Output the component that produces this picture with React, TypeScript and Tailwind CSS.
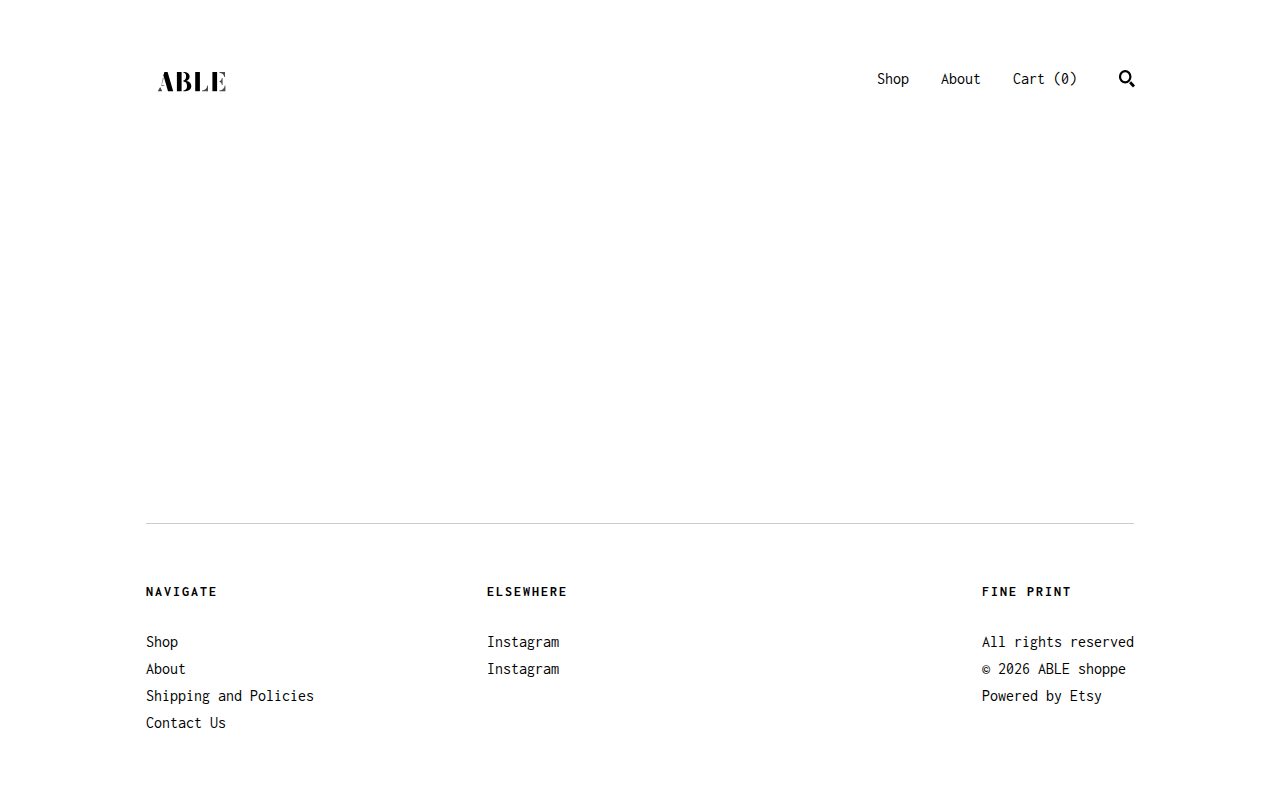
import React from "react";

type Item = { label: string; href?: string };

const navigation: Item[] = [
  { label: "Shop", href: "#shop" },
  { label: "About", href: "#about" },
  { label: "Cart (0)", href: "#cart" },
];

const navigate: Item[] = [
  { label: "Shop", href: "#shop" },
  { label: "About", href: "#about" },
  { label: "Shipping and Policies", href: "#policies" },
  { label: "Contact Us", href: "#contact" },
];

const elsewhere: Item[] = [
  { label: "Instagram", href: "#instagram" },
  { label: "Instagram", href: "#instagram-shop" },
];

const finePrint: Item[] = [
  { label: "All rights reserved" },
  { label: "© 2026 ABLE shoppe" },
  { label: "Powered by Etsy", href: "#etsy" },
];

function Logo() {
  return (
    <svg
      viewBox="0 0 88 44"
      className="h-11 w-22 blur-[0.5px]"
      role="img"
      aria-label="ABLE"
      fill="#000"
    >
      {/* A */}
      <path d="M18.4 12h3.2l5.6 19.2h-5.2L17.4 15.2z" />
      <path d="M17 17l.7 1.6-1.9 6.4h2.4v1h-3z" opacity=".5" />
      <path d="M14.2 27l2 4.2h-4.4z" opacity=".75" />
      {/* B */}
      <path d="M30.9 12h4.7v19.2h-4.7z" />
      <path d="M37.4 12c4.2 0 6.2 1.8 6.2 4.6 0 2.2-1.2 3.8-3.2 4.3 3.2.5 4.9 2.3 4.9 5 0 3.3-2.6 5.3-7.9 5.3v-.8c2.7-.4 3.6-1.9 3.6-4.4 0-2.6-1-4.1-3.6-4.4v-1.2c1.9-.3 2.7-1.6 2.7-3.8 0-2.3-.8-3.6-2.7-3.8z" />
      {/* L */}
      <path d="M49.2 12h4.7v19.2h-4.7z" />
      <path d="M62 25.5v5.7h-6v-.8c3.1-.4 4.9-1.9 5.4-4.9z" opacity=".7" />
      {/* E */}
      <path d="M66.4 12h4.7v19.2h-4.7z" />
      <path
        d="M73.4 12h5.6v5h-.7c-.6-2.4-2-3.8-4.9-4.2zM76.6 18v7h-.8c-.2-1.9-.9-2.8-2.2-3v-.9c1.3-.2 2-1.1 2.2-3.1zM79.4 25.5v5.7h-6v-.8c3.1-.4 4.9-1.9 5.4-4.9z"
        opacity=".7"
      />
    </svg>
  );
}

function Column({ title, items }: { title: string; items: Item[] }) {
  return (
    <section>
      <h2 className="text-[14px] leading-6 font-bold tracking-[2px] uppercase">{title}</h2>
      <ul className="mt-6 text-[16px] leading-[27px]">
        {items.map((item) => (
          <li key={item.label + (item.href ?? "")}>
            {item.href ? <a href={item.href}>{item.label}</a> : item.label}
          </li>
        ))}
      </ul>
    </section>
  );
}

export default function App() {
  return (
    <div className="min-h-screen bg-white px-8 text-black font-[Inconsolata,'Noto_Sans_Mono_CJK_SC','Liberation_Mono',monospace]">
      <div className="mx-auto max-w-[988px]">
        <header className="flex items-start justify-between pt-15">
          <a href="#home">
            <Logo />
          </a>
          <div className="flex items-center pt-[7px]">
            <nav className="flex gap-8 text-[16px] leading-6">
              {navigation.map((item) => (
                <a key={item.label} href={item.href}>
                  {item.label}
                </a>
              ))}
            </nav>
            <button type="button" aria-label="Search" className="ml-10 -mr-0.5 cursor-pointer">
              <svg viewBox="0 0 19 20" className="h-5 w-[19px]" fill="none" stroke="#000">
                <ellipse cx="8.2" cy="7.8" rx="5.2" ry="5.6" strokeWidth="2.2" />
                <path d="M13.1 13.3l3.9 4.1" strokeWidth="2.9" />
              </svg>
            </button>
          </div>
        </header>

        <main className="h-[419px]" />

        <footer className="grid grid-cols-[341fr_495fr_auto] border-t border-[#cccccc] pt-14 pb-16">
          <Column title="Navigate" items={navigate} />
          <Column title="Elsewhere" items={elsewhere} />
          <Column title="Fine Print" items={finePrint} />
        </footer>
      </div>
    </div>
  );
}
